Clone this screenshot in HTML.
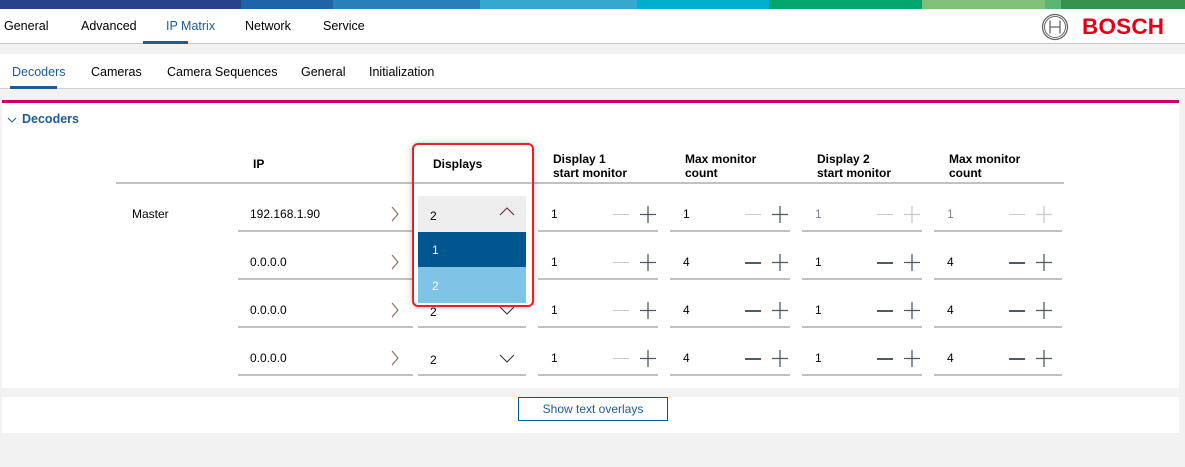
<!DOCTYPE html>
<html><head><meta charset="utf-8"><style>
*{margin:0;padding:0;box-sizing:border-box}
body{width:1185px;height:467px;background:#f2f2f2;font-family:"Liberation Sans",Arial,sans-serif;font-size:12px;color:#000;position:relative;overflow:hidden}
.a{position:absolute}
.bar div{position:absolute;top:0;height:9px}
.t{position:absolute;white-space:nowrap}
.ul{position:absolute;height:2px;background:#c1c1c1}
.mi{position:absolute;width:15px;height:1px}
</style></head><body>
<div class="bar">
<div style="left:0;width:241px;background:#26418a"></div>
<div style="left:241px;width:92px;background:#1e64a9"></div>
<div style="left:333px;width:147px;background:#2a80b6"></div>
<div style="left:480px;width:157px;background:#35a8cc"></div>
<div style="left:637px;width:132px;background:#00afd0"></div>
<div style="left:769px;width:153px;background:#00a66c"></div>
<div style="left:922px;width:123px;background:#80c17a"></div>
<div style="left:1045px;width:16px;background:#5bb577"></div>
<div style="left:1061px;width:124px;background:#35924d"></div>
</div>
<div class="a" style="left:0;top:9px;width:1185px;height:35px;background:#fff;border-bottom:1px solid #c8c8c8"></div>
<div class="t" style="left:4px;top:19px;font-size:12.5px">General</div>
<div class="t" style="left:81px;top:19px;font-size:12.5px">Advanced</div>
<div class="t" style="left:166px;top:19px;font-size:12.5px;color:#1e5a96">IP Matrix</div>
<div class="a" style="left:143px;top:41px;width:45px;height:3px;background:#1e5a96"></div>
<div class="t" style="left:245px;top:19px;font-size:12.5px">Network</div>
<div class="t" style="left:323px;top:19px;font-size:12.5px">Service</div>
<svg class="a" style="left:1041px;top:13px" width="28" height="28" viewBox="0 0 28 28"><circle cx="14" cy="14" r="12.5" fill="none" stroke="#666" stroke-width="1.3"/><circle cx="14" cy="14" r="10.5" fill="none" stroke="#666" stroke-width="1"/><path d="M9 7.5v13M19 7.5v13M9 14h10" stroke="#666" stroke-width="1.3" fill="none"/></svg>
<div class="t" style="left:1082px;top:14px;font-size:22.5px;font-weight:bold;color:#e30016;letter-spacing:0.2px">BOSCH</div>
<div class="a" style="left:0;top:54px;width:1185px;height:35px;background:#fff;border-bottom:1px solid #d0d0d0"></div>
<div class="t" style="left:12px;top:65px;font-size:12.5px;color:#1e5a96">Decoders</div>
<div class="a" style="left:10px;top:86px;width:47px;height:3px;background:#1e5a96"></div>
<div class="t" style="left:91px;top:65px;font-size:12.5px">Cameras</div>
<div class="t" style="left:167px;top:65px;font-size:12.5px">Camera Sequences</div>
<div class="t" style="left:301px;top:65px;font-size:12.5px">General</div>
<div class="t" style="left:369px;top:65px;font-size:12.5px">Initialization</div>
<div class="a" style="left:2px;top:100px;width:1177px;height:288px;background:#fff;border-top:3px solid #c3006b"></div>
<svg class="a" style="left:7px;top:117px" width="10" height="6"><path d="M1 1l4 4 4-4" fill="none" stroke="#1e5a96" stroke-width="1"/></svg>
<div class="t" style="left:22px;top:112px;font-size:12.5px;font-weight:bold;color:#1e5a96">Decoders</div>
<div class="a" style="left:116px;top:182px;width:948px;height:2px;background:#c1c1c1"></div>
<div class="t" style="left:253px;top:157px;font-weight:bold">IP</div>
<div class="t" style="left:433px;top:157px;font-weight:bold">Displays</div>
<div class="t" style="left:553px;top:152px;font-weight:bold;line-height:14px">Display 1<br>start monitor</div>
<div class="t" style="left:685px;top:152px;font-weight:bold;line-height:14px">Max monitor<br>count</div>
<div class="t" style="left:817px;top:152px;font-weight:bold;line-height:14px">Display 2<br>start monitor</div>
<div class="t" style="left:949px;top:152px;font-weight:bold;line-height:14px">Max monitor<br>count</div>
<div class="t" style="left:132px;top:207px">Master</div>

<div id="rows"></div>
<div class="a" style="left:418px;top:196px;width:108px;height:36px;background:#eeeeee"></div>

<script>
var ys=[214,262,310,358],ip=["192.168.1.90","0.0.0.0","0.0.0.0","0.0.0.0"];
var h="";
var vals=[["1","1","1","1"],["1","4","1","4"],["1","4","1","4"],["1","4","1","4"]];
var cells=[538,670,802,934],ws=[120,120,120,128];
for(var i=0;i<4;i++){var y=ys[i];
h+='<div class="ul" style="left:238px;top:'+(y+16)+'px;width:175px"></div>';
h+='<div class="t" style="left:250px;top:'+(y-7)+'px">'+ip[i]+'</div>';
h+='<svg class="a" style="left:390px;top:'+(y-8)+'px" width="10" height="16"><path d="M2 1l6 7-6 7" fill="none" stroke="#8a5a5a" stroke-width="1"/></svg>';
h+='<div class="ul" style="left:418px;top:'+(y+16)+'px;width:108px"></div>';
if(i>0){h+='<div class="t" style="left:430px;top:'+(y-5)+'px">2</div>';
h+='<svg class="a" style="left:499px;top:'+(y-5)+'px" width="16" height="10"><path d="M1 2l7 7 7-7" fill="none" stroke="#333" stroke-width="1"/></svg>';}
for(var c=0;c<4;c++){var x=cells[c];var dis=(i==0&&c>=2);
h+='<div class="ul" style="left:'+x+'px;top:'+(y+16)+'px;width:'+ws[c]+'px"></div>';
h+='<div class="t" style="left:'+(x+13)+'px;top:'+(y-7)+'px;color:'+(dis?'#8a80a0':'#000')+'">'+vals[i][c]+'</div>';
var mcol=(c==0||i==0)?'#c8c8c8':'#505a64';
h+='<div class="a" style="left:'+(x+75)+'px;top:'+y+'px;width:16px;height:'+(mcol=='#c8c8c8'?1:2)+'px;background:'+mcol+'"></div>';
var pcol=dis?'#c8c8c8':'#505a64';
h+='<svg class="a" style="left:'+(x+102)+'px;top:'+(y-8)+'px" width="16" height="17"><path d="M0 8.5h16M8 0v17" stroke="'+pcol+'" stroke-width="1.3" fill="none"/></svg>';}
}
document.getElementById("rows").outerHTML=h;
</script>
<div class="t" style="left:430px;top:209px">2</div>
<svg class="a" style="left:499px;top:207px" width="16" height="10"><path d="M1 8l7-7 7 7" fill="none" stroke="#5a2a3a" stroke-width="1"/></svg>
<div class="a" style="left:418px;top:232px;width:108px;height:35px;background:#00568f"></div>
<div class="t" style="left:432px;top:243px;color:#fff">1</div>
<div class="a" style="left:418px;top:267px;width:108px;height:36px;background:#7fc4e6"></div>
<div class="t" style="left:432px;top:279px;color:#fff">2</div>
<div class="a" style="left:412px;top:143px;width:122px;height:164px;border:2px solid #e8202a;border-radius:6px;box-shadow:0 0 6px rgba(0,0,0,0.25)"></div>

<div class="a" style="left:2px;top:397px;width:1177px;height:36px;background:#fff"></div>
<div class="a" style="left:518px;top:397px;width:150px;height:24px;border:1px solid #00568f;background:#fff"></div>
<div class="t" style="left:518px;top:402px;width:150px;text-align:center;color:#1e5a96">Show text overlays</div>
</body></html>
